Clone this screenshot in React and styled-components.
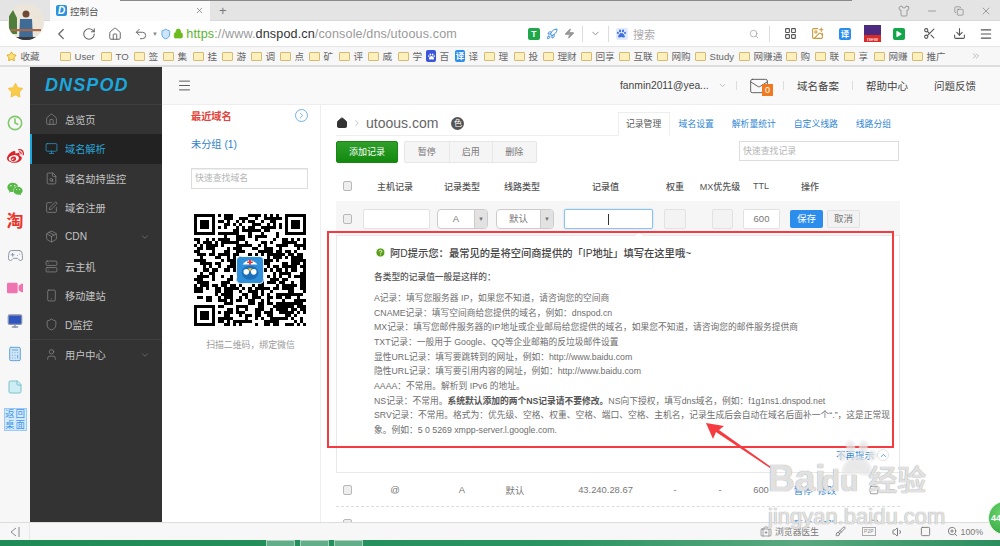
import styled, { createGlobalStyle } from "styled-components";
import {
  BriefcaseMedical, Brush, Calculator, ChevronDown, ChevronLeft, ChevronRight, ChevronUp, ChevronsRight, Clock, Copy, Download,
  FileSearch, Gamepad2, HelpCircle, House, ImagePlus, LayoutGrid, Lock, Mail, Menu, Minus, Monitor, Package, RotateCw, Rocket,
  Scissors, Search, Server, Shield, Shirt, Smartphone, Square, SquarePen, StickyNote, Star, Undo2, User, Volume1, X, Zap, ZoomIn,
} from "lucide-react";
import { FaWeibo, FaWeixin, FaPaw, FaPlay, FaVideo } from "react-icons/fa";

const GlobalStyle = createGlobalStyle`
  html, body { margin: 0; padding: 0; background: #fff; }
  * { box-sizing: border-box; }
  body { font-family: "Liberation Sans", "Noto Sans CJK SC", sans-serif; }
`;

const Page = styled.div`
  position: relative;
  width: 1000px;
  height: 546px;
  overflow: hidden;
  display: flex;
  flex-direction: column;
`;

/* browser chrome */
const TabBar = styled.div`
  height: 21px;
  background: #e4e4e4;
  display: flex;
  align-items: stretch;
  padding-left: 50px;
  box-shadow: inset 0 -1px 0 #d8d8d8;
`;
const Tab = styled.div`
  width: 160px;
  background: #fafafa;
  display: flex;
  align-items: center;
  gap: 3px;
  padding: 0 6px;
  font-size: 9.5px;
  color: #555;
`;
const TabLogo = styled.span`
  width: 11px;
  height: 11px;
  border-radius: 2px;
  background: #2d93dc;
  color: #fff;
  font: italic bold 10px/11px "Liberation Sans", sans-serif;
  text-align: center;
`;
const TabTitle = styled.span`
  flex: 1;
`;
const NewTab = styled.span`
  margin-left: 9px;
  font-size: 13px;
  line-height: 21px;
  color: #777;
`;
const WindowButtons = styled.div`
  margin-left: auto;
  display: flex;
  align-items: center;
  gap: 16px;
  padding-right: 8px;
  color: #777;
`;
const Avatar = styled.svg`
  position: absolute;
  left: 8px;
  top: 4px;
  width: 36px;
  height: 36px;
  border-radius: 50%;
`;
const TopShade = styled.div`
  position: absolute;
  left: 120px;
  top: 0;
  width: 732px;
  height: 1px;
  background: #8a8a8a;
`;
const NavBar = styled.div`
  height: 25px;
  background: #fff;
  display: flex;
  align-items: center;
  padding-left: 52px;
  color: #666;
`;
const NavButtons = styled.div`
  display: flex;
  align-items: center;
  gap: 12px;
  width: 112px;
`;
const NavCaret = styled.span`
  font-size: 6px;
  color: #888;
  margin-left: -8px;
`;
const Divider = styled.span`
  width: 1px;
  height: 16px;
  background: #ddd;
  margin: 0 ${(p) => p.$gap || 5}px;
  flex: none;
`;
const Url = styled.div`
  font-size: 12.6px;
  color: #9a9a9a;
  margin-left: 3px;
  width: 354px;
  white-space: nowrap;
  letter-spacing: 0.12px;
`;
const Https = styled.span`
  color: #58b62c;
`;
const Host = styled.span`
  color: #333;
`;
const NavTools = styled.div`
  display: flex;
  align-items: center;
  gap: 6px;
  color: #888;
`;
const SearchBox = styled.div`
  width: 141px;
  display: flex;
  align-items: center;
  gap: 5px;
  font-size: 11px;
  color: #aaa;
  padding-left: 2px;
`;
const SearchIcon = styled.span`
  margin-left: auto;
  margin-right: 5px;
  display: flex;
`;
const ToolIcons = styled.div`
  display: flex;
  align-items: center;
  color: #555;
  margin-left: 2px;
`;
const ToolSlot = styled.span`
  width: ${(p) => p.$w || 27}px;
  display: flex;
  align-items: center;
  justify-content: center;
  gap: 3px;
`;
const ColorTile = styled.span`
  width: ${(p) => p.$w || 12}px;
  height: 12px;
  border-radius: 2px;
  background: ${(p) => p.$bg};
  color: #fff;
  font-size: 8.5px;
  line-height: 12px;
  font-weight: bold;
  text-align: center;
  display: inline-flex;
  align-items: center;
  justify-content: center;
  flex: none;
`;
const NewTile = styled.span`
  width: 17px;
  height: 17px;
  background: linear-gradient(#4b2a80 60%, #d92a2a 60%);
  color: #fff;
  font-size: 6px;
  line-height: 6px;
  padding-top: 11px;
  text-align: center;
`;
const BookmarkBar = styled.div`
  height: 21px;
  background: #f7f7f7;
  border-top: 1px solid #e6e6e6;
  border-bottom: 2px solid #dedede;
  display: flex;
  align-items: center;
  padding-left: 6px;
  font-size: 9.6px;
  color: #666;
`;
const Bookmark = styled.span`
  width: ${(p) => p.$w}px;
  flex: none;
  display: flex;
  align-items: center;
  gap: 3.5px;
  white-space: nowrap;
`;
const Folder = styled.i`
  width: 11px;
  height: 9px;
  flex: none;
  background: #fdf0bd;
  border: 1px solid #d3bb73;
  border-radius: 1px;
`;
const MoreBookmarks = styled.span`
  margin-left: 19px;
  display: flex;
  color: #aaa;
`;

/* body */
const Body = styled.div`
  flex: 1;
  display: flex;
  min-height: 0;
`;
const Rail = styled.div`
  width: 30px;
  background: #f7f7f7;
  display: flex;
  flex-direction: column;
  align-items: center;
  padding-top: 14px;
  gap: 15px;
  flex: none;
`;
const RailIcon = styled.span`
  height: 18px;
  width: 18px;
  display: flex;
  align-items: center;
  justify-content: center;
  color: ${(p) => p.$color};
  font-weight: bold;
  font-size: 17px;
  line-height: 18px;
`;
const DesktopTile = styled.span`
  width: 23px;
  height: 23px;
  background: #d5ebff;
  border: 1px solid #9ccaf5;
  color: #3f97e8;
  font-size: 9.5px;
  line-height: 10px;
  display: grid;
  grid-template-columns: 1fr 1fr;
  text-align: center;
  margin-top: -3px;
`;
const Sidebar = styled.nav`
  width: 132px;
  background: #333;
  color: #c8c8c8;
  flex: none;
`;
const Logo = styled.div`
  height: 38px;
  border-bottom: 1px solid #3e3e3e;
  padding-left: 15px;
  font: italic bold 18px/36px "Liberation Sans", sans-serif;
  letter-spacing: 1.1px;
  color: #1ba7de;
`;
const SideItem = styled.div`
  height: 29.3px;
  display: flex;
  align-items: center;
  gap: 7px;
  font-size: 10.2px;
  background: ${(p) => (p.$active ? "#222" : "transparent")};
  color: ${(p) => (p.$active ? "#29a5d6" : "#c4c4c4")};
  border-left: ${(p) => (p.$active ? "2px solid #1ba7de" : "none")};
  padding-left: ${(p) => (p.$active ? 13 : 15)}px;
  border-top: ${(p) => (p.$rule ? "1px solid #3e3e3e" : "none")};
  svg.icon {
    color: ${(p) => (p.$active ? "#29a5d6" : "#8f8f8f")};
    flex: none;
  }
`;
const Caret = styled.span`
  margin-left: auto;
  padding-right: 12px;
  display: flex;
  color: #6f6f6f;
`;
const Right = styled.div`
  flex: 1;
  min-width: 0;
  display: flex;
  flex-direction: column;
`;
const AppHeader = styled.header`
  height: 38px;
  flex: none;
  background: #f9f9f9;
  border-bottom: 1px solid #eee;
  display: flex;
  align-items: center;
  padding-left: 15px;
  font-size: 10.5px;
  color: #444;
`;
const Hamburger = styled.span`
  display: flex;
  color: #444;
  margin-right: 428px;
`;
const HeaderUser = styled.span`
  width: 116px;
  font-size: 10.3px;
  white-space: nowrap;
  display: flex;
  align-items: center;
  gap: 9px;
  flex: none;
`;
const HeaderSep = styled.span`
  width: 1px;
  height: 9px;
  background: #ddd;
  flex: none;
`;
const MailWrap = styled.span`
  position: relative;
  display: flex;
  margin: 0 14px 0 12px;
  color: #555;
`;
const MailBadge = styled.span`
  position: absolute;
  left: 13px;
  top: 8px;
  width: 11px;
  height: 12px;
  background: #f07a22;
  color: #fff;
  font-size: 9px;
  line-height: 12px;
  text-align: center;
`;
const HeaderLink = styled.span`
  width: ${(p) => p.$w}px;
  padding-left: ${(p) => p.$pad}px;
  flex: none;
`;
const ContentRow = styled.div`
  flex: 1;
  min-height: 0;
  display: flex;
`;
const DomainPanel = styled.aside`
  width: 159px;
  flex: none;
  background: #fff;
  border-right: 1px solid #eee;
  padding: 2px 0 0 29px;
`;
const PanelHead = styled.div`
  width: 117px;
  display: flex;
  justify-content: space-between;
  align-items: center;
  color: #e0433b;
  font-size: 10.2px;
  font-weight: bold;
  height: 16px;
`;
const RoundButton = styled.span`
  width: 13px;
  height: 13px;
  border: 1px solid #6fb3e6;
  border-radius: 50%;
  color: #4d9cd8;
  display: flex;
  align-items: center;
  justify-content: center;
`;
const GroupLink = styled.div`
  margin-top: 15px;
  color: #2f7fc8;
  font-size: 10.2px;
  line-height: 14px;
`;
const DomainSearch = styled.div`
  width: 117px;
  height: 21px;
  margin-top: 16px;
  border: 1px solid #ddd;
  box-shadow: inset 0 1px 1px #eee;
  font-size: 8.9px;
  line-height: 19px;
  color: #b5b5b5;
  padding-left: 3px;
`;
const QrWrap = styled.div`
  position: relative;
  width: 112px;
  height: 112px;
  margin: 25px 0 0 3px;
`;
const QrLogo = styled.svg`
  position: absolute;
  left: 42px;
  top: 42px;
  width: 28px;
  height: 28px;
`;
const QrCaption = styled.div`
  margin-top: 12px;
  width: 117px;
  margin-left: 1px;
  text-align: center;
  font-size: 8.9px;
  color: #999;
`;
const Content = styled.main`
  flex: 1;
  overflow: hidden;
  padding: 7px 100px 0 15px;
  background: #fff;
`;
const TitleRow = styled.div`
  height: 24px;
  display: flex;
  align-items: flex-end;
  border-bottom: 1px solid #eee;
`;
const Crumb = styled.div`
  width: 282px;
  height: 24px;
  display: flex;
  align-items: center;
  color: #666;
  font-size: 14px;
  gap: 4px;
`;
const CrumbHome = styled.span`
  color: #333;
  display: flex;
`;
const CrumbBadge = styled.span`
  width: 13px;
  height: 13px;
  border-radius: 50%;
  margin-left: 9px;
  background: #555;
  color: #fff;
  font-size: 8px;
  line-height: 13px;
  text-align: center;
`;
const Tabs = styled.div`
  display: flex;
  align-items: flex-end;
  font-size: 8.8px;
`;
const TabLink = styled.span`
  height: 24px;
  line-height: 23px;
  padding: 0 ${(p) => (p.$active ? 7.4 : 8)}px;
  color: ${(p) => (p.$active ? "#555" : "#2f86d2")};
  background: #fff;
  border: 1px solid ${(p) => (p.$active ? "#eee" : "transparent")};
  border-bottom: ${(p) => (p.$active ? "1px solid #fff" : "none")};
  margin-bottom: -1px;
  white-space: nowrap;
`;
const Toolbar = styled.div`
  height: 22px;
  margin-top: 5px;
  display: flex;
`;
const AddButton = styled.span`
  width: 62px;
  background: linear-gradient(#2f9f2a, #128a0e);
  border: 1px solid #1b8516;
  border-radius: 2px;
  color: #fff;
  font-size: 9px;
  line-height: 20px;
  text-align: center;
`;
const ButtonGroup = styled.div`
  display: flex;
  margin-left: 6px;
  border: 1px solid #e6e6e6;
  border-radius: 2px;
  background: #f5f5f5;
`;
const GroupButton = styled.span`
  width: 43.5px;
  text-align: center;
  color: #777;
  font-size: 9px;
  line-height: 20px;
  border-left: ${(p) => (p.$first ? "none" : "1px solid #e6e6e6")};
`;
const RecordSearch = styled.div`
  margin-left: auto;
  margin-right: 1px;
  width: 160px;
  height: 20px;
  border: 1px solid #ddd;
  font-size: 8.9px;
  line-height: 18px;
  color: #b5b5b5;
  padding-left: 3px;
`;
const columns = "27px 64px 70px 50px 117px 22px 68px 14px 84px 1fr";
const HeadRow = styled.div`
  height: 30px;
  margin-top: 8px;
  display: grid;
  grid-template-columns: ${columns};
  align-items: center;
  justify-items: center;
  color: #555;
  font-size: 9px;
  font-weight: 500;
  white-space: nowrap;
`;
const Check = styled.i`
  width: 9px;
  height: 10px;
  border: 1px solid #b8b8b8;
  border-radius: 2px;
  background: #eee;
  display: block;
  justify-self: start;
  margin-left: 7px;
`;
const EditRow = styled.div`
  height: 34px;
  background: #f6f6f6;
  display: grid;
  grid-template-columns: 27px 74px 59px 68px 100px 48px 31px 47px auto;
  align-items: center;
  padding-top: 2px;
`;
const Field = styled.div`
  width: ${(p) => p.$w}px;
  height: 20px;
  background: ${(p) => (p.$empty ? "#f3f3f3" : "#fff")};
  border: 1px solid ${(p) => (p.$focus ? "#8cc4ee" : "#e2e2e2")};
  box-shadow: ${(p) => (p.$focus ? "0 0 2px #a9d4f5" : "none")};
  border-radius: 2px;
  font-size: 9.5px;
  line-height: 18px;
  text-align: center;
  color: #777;
`;
const Select = styled.div`
  width: ${(p) => p.$w}px;
  height: 20px;
  display: flex;
  background: #fff;
  border: 1px solid #ccc;
  border-radius: 4px;
  overflow: hidden;
  font-size: 9.5px;
  line-height: 18px;
  color: #777;
`;
const SelectValue = styled.span`
  flex: 1;
  text-align: center;
`;
const SelectArrow = styled.span`
  width: 13px;
  background: #e2e2e2;
  border-left: 1px solid #ccc;
  color: #777;
  font-size: 6px;
  text-align: center;
`;
const Caretline = styled.i`
  display: inline-block;
  width: 1px;
  height: 11px;
  background: #333;
  vertical-align: middle;
`;
const Actions = styled.div`
  display: flex;
  gap: 4px;
`;
const SaveButton = styled.span`
  width: 33px;
  height: 18px;
  background: #2c8ded;
  border-radius: 2px;
  color: #fff;
  font-size: 9.5px;
  line-height: 18px;
  text-align: center;
`;
const CancelButton = styled.span`
  width: 33px;
  height: 18px;
  background: #f2f2f2;
  border: 1px solid #e2e2e2;
  border-radius: 2px;
  color: #777;
  font-size: 9.5px;
  line-height: 16px;
  text-align: center;
`;
const TipPanel = styled.section`
  position: relative;
  height: 238px;
  padding: 8px 6px 0 37px;
  border: 1px solid #e8e8e8;
  background: #fff;
  color: #6e6e6e;
  &::before {
    content: "";
    position: absolute;
    left: 298px;
    top: -4px;
    width: 7px;
    height: 7px;
    background: #fff;
    border: 1px solid #e8e8e8;
    border-width: 1px 0 0 1px;
    transform: rotate(45deg);
  }
`;
const TipTitle = styled.div`
  display: flex;
  align-items: center;
  gap: 4px;
  font-size: 10.3px;
  height: 16px;
  color: #444;
  font-weight: 500;
  margin-left: 1px;
  white-space: nowrap;
`;
const TipSub = styled.div`
  margin-top: 10px;
  font-size: 8.7px;
  line-height: 14px;
  color: #555;
  font-weight: 500;
`;
const TipList = styled.div`
  margin-top: 7px;
  font-size: 8.75px;
  line-height: 14.67px;
  white-space: nowrap;
`;
const TipLine = styled.div`
  overflow: hidden;
`;
const Strong = styled.b`
  color: #555;
  font-weight: 700;
`;
const TipClose = styled.div`
  position: absolute;
  right: 10px;
  top: 212px;
  display: flex;
  align-items: center;
  gap: 3px;
  font-size: 9.5px;
  color: #2f86d2;
`;
const CloseRing = styled.span`
  width: 12px;
  height: 12px;
  border: 1px solid #e3e3e3;
  border-radius: 50%;
  display: flex;
  align-items: center;
  justify-content: center;
`;
const DataRow = styled.div`
  height: 34px;
  display: grid;
  grid-template-columns: ${columns};
  align-items: center;
  justify-items: center;
  color: #777;
  font-size: 9.4px;
  border-bottom: 1px dashed #ddd;
  white-space: nowrap;
`;
const LineCell = styled.span`
  margin-right: 14px;
`;
const RowLinks = styled.span`
  color: #2f86d2;
  display: flex;
  gap: 5px;
  margin-left: 10px;
  grid-column: 9;
`;
const RowIcons = styled.span`
  display: flex;
  gap: 7px;
  justify-self: start;
  margin-left: 17px;
  color: #888;
`;

/* bottom */
const StatusBar = styled.footer`
  height: 18px;
  background: #f7f7f7;
  border-top: 1px solid #ddd;
  display: flex;
  align-items: center;
  color: #777;
  font-size: 8.8px;
  flex: none;
`;
const StatusCollapse = styled.span`
  width: 30px;
  height: 100%;
  border-right: 1px solid #e8e8e8;
  display: flex;
  align-items: center;
  justify-content: center;
  color: #888;
`;
const StatusTools = styled.div`
  margin-left: auto;
  padding-right: 17px;
  display: flex;
  align-items: center;
  gap: 16px;
`;
const StatusGroup = styled.span`
  display: flex;
  align-items: center;
  gap: 3px;
  white-space: nowrap;
`;
const P2pTag = styled.span`
  border: 1px solid #aaa;
  font-size: 5px;
  line-height: 7px;
  padding: 0 1px;
  color: #888;
`;
const TaskBar = styled.div`
  height: 6px;
  flex: none;
  background: linear-gradient(90deg, #1f8a55, #2a9362 55%, #5aa880 80%, #2b8d5d);
  display: flex;
  padding-left: 266px;
  gap: 5px;
`;
const TaskButton = styled.span`
  width: 29px;
  background: #62ae8a;
  border: 1px solid #a9d2bd;
  border-bottom: none;
`;

/* things painted over the screenshot */
const RedFrame = styled.div`
  position: absolute;
  left: 327px;
  top: 231px;
  width: 567px;
  height: 217px;
  border: 2px solid #f53b3f;
  pointer-events: none;
`;
const ArrowMark = styled.svg`
  position: absolute;
  left: 695px;
  top: 415px;
  width: 90px;
  height: 65px;
`;
const Watermark = styled.div`
  position: absolute;
  left: 768px;
  top: 460px;
  width: 180px;
  color: rgba(255, 255, 255, 0.68);
  text-shadow: 0 0 1px #aaa, 0 0 1px #aaa;
`;
const MarkBrand = styled.div`
  display: flex;
  align-items: baseline;
  font-weight: bold;
  line-height: 38px;
  white-space: nowrap;
`;
const MarkBai = styled.span`
  font-size: 37px;
`;
const MarkDu = styled.span`
  font-size: 30px;
  margin-left: -4px;
`;
const MarkCjk = styled.span`
  font-size: 29px;
  font-weight: 500;
  margin-left: 10px;
`;
const MarkUrl = styled.div`
  font-size: 22px;
  line-height: 24px;
  margin-top: 5px;
  white-space: nowrap;
`;
const MarkPaw = styled.span`
  position: absolute;
  left: 70px;
  top: -21px;
  color: rgba(255, 255, 255, 0.5);
  filter: drop-shadow(0 0 1px #aaa);
`;
const CountBall = styled.div`
  position: absolute;
  left: 988px;
  top: 501px;
  width: 34px;
  height: 34px;
  border-radius: 50%;
  background: radial-gradient(circle at 40% 35%, #6ad46a, #2b9d3c);
  border: 1px solid #dff1df;
  color: #fff;
  font-size: 9px;
  font-weight: bold;
  line-height: 32px;
  padding-left: 2px;
`;

const bookmarks = [
  ["User", 41], ["TO", 33], ["签", 29], ["集", 30], ["挂", 29], ["游", 29], ["调", 29], ["点", 29], ["矿", 30], ["评", 29], ["威", 30], ["学", 28],
];
const bookmarks2 = [
  ["理", 30], ["投", 29], ["理财", 38], ["回享", 38], ["互联", 38], ["网购", 38], ["Study", 44], ["网赚通", 47], ["购", 29], ["联", 29], ["享", 30], ["网赚", 38], ["推广", 40],
];

const sideItems = [
  ["总览页", House],
  ["域名解析", Monitor, "active"],
  ["域名劫持监控", FileSearch],
  ["域名注册", SquarePen],
  ["CDN", Package, "caret"],
  ["云主机", Server],
  ["移动建站", Smartphone],
  ["D监控", Shield],
  ["用户中心", User, "caret", "rule"],
];

const tipLines = [
  "A记录：填写您服务器 IP，如果您不知道，请咨询您的空间商",
  "CNAME记录：填写空间商给您提供的域名，例如：dnspod.cn",
  "MX记录：填写您邮件服务器的IP地址或企业邮局给您提供的域名，如果您不知道，请咨询您的邮件服务提供商",
  "TXT记录：一般用于 Google、QQ等企业邮箱的反垃圾邮件设置",
  "显性URL记录：填写要跳转到的网址，例如：http://www.baidu.com",
  "隐性URL记录：填写要引用内容的网址，例如：http://www.baidu.com",
  "AAAA：不常用。解析到 IPv6 的地址。",
];

// finder patterns are fixed, the rest of the modules come from a small seeded generator
function qrCells(size) {
  const cells = [];
  let seed = 20160;
  const far = size - 8;
  const inFinder = (x, y) => (x < 8 && y < 8) || (x >= far && y < 8) || (x < 8 && y >= far);
  for (let y = 0; y < size; y++) {
    for (let x = 0; x < size; x++) {
      seed = (seed * 1103515245 + 12345) & 0x7fffffff;
      if (!inFinder(x, y) && (seed >> 16) % 100 < 52) cells.push([x, y]);
    }
  }
  return cells;
}

function QrCode() {
  const size = 37;
  const finders = [[0, 0], [size - 7, 0], [0, size - 7]];
  return (
    <QrWrap>
      <svg width="112" height="112" viewBox={`0 0 ${size} ${size}`} shapeRendering="crispEdges">
        {qrCells(size).map(([x, y]) => (
          <rect key={`${x}-${y}`} x={x} y={y} width="1" height="1" fill="#000" />
        ))}
        {finders.map(([x, y]) => (
          <g key={`${x}-${y}`}>
            <rect x={x} y={y} width="7" height="7" fill="#000" />
            <rect x={x + 1} y={y + 1} width="5" height="5" fill="#fff" />
            <rect x={x + 2} y={y + 2} width="3" height="3" fill="#000" />
          </g>
        ))}
      </svg>
      <QrLogo viewBox="0 0 30 30">
        <rect x="0.5" y="0.5" width="29" height="29" rx="4" fill="#2f8fd8" stroke="#fff" />
        <path d="M7 9 Q15 0 23 9 Z" fill="#fff" />
        <path d="M14 4h2v2h2v1.5h-2v2h-2v-2h-2V6h2z" fill="#e33" />
        <ellipse cx="15" cy="18" rx="9" ry="7.5" fill="#1d6fb8" />
        <circle cx="11" cy="17" r="3" fill="#fff" />
        <circle cx="19" cy="17" r="3" fill="#fff" />
        <path d="M13 13h4l-2 4z" fill="#f2c230" />
      </QrLogo>
    </QrWrap>
  );
}

export default function App() {
  return (
    <Page>
      <GlobalStyle />
      <TabBar>
        <Tab>
          <TabLogo>D</TabLogo>
          <TabTitle>控制台</TabTitle>
          <X size={9} color="#777" />
        </Tab>
        <NewTab>+</NewTab>
        <WindowButtons>
          <Shirt size={12} strokeWidth={1.3} />
          <Minus size={12} strokeWidth={1.3} />
          <Copy size={10} strokeWidth={1.5} />
          <X size={12} strokeWidth={1.3} />
        </WindowButtons>
      </TabBar>
      <NavBar>
        <NavButtons>
          <ChevronLeft size={18} strokeWidth={1.6} />
          <RotateCw size={14} strokeWidth={1.8} />
          <House size={14} strokeWidth={1.7} />
          <Undo2 size={14} strokeWidth={1.7} />
          <NavCaret>▼</NavCaret>
        </NavButtons>
        <Shield size={12} color="#5aa7e6" fill="#cfe6fa" />
        <Lock size={11} color="#6cbb1e" fill="#6cbb1e" style={{ marginLeft: 1 }} />
        <Url>
          <Https>https</Https>://www.<Host>dnspod.cn</Host>/console/dns/utoous.com
        </Url>
        <NavTools>
          <ColorTile $bg="#1fa74a">T</ColorTile>
          <Rocket size={12} color="#3d8fe0" />
          <Zap size={11} color="#999" fill="#999" />
          <Divider $gap={1} />
          <ChevronDown size={11} />
          <Divider $gap={1} />
          <ColorTile $bg="#dfe9ff"><FaPaw size={9} color="#3f6fe0" /></ColorTile>
        </NavTools>
        <SearchBox>
          <span>&nbsp;搜索</span>
          <SearchIcon><Search size={10} /></SearchIcon>
        </SearchBox>
        <Divider $gap={0} />
        <ToolIcons>
          <ToolSlot><LayoutGrid size={13} /></ToolSlot>
          <ToolSlot><ImagePlus size={13} color="#c99a3a" /></ToolSlot>
          <ToolSlot $w={28}><ColorTile $bg="#2a8df0">译</ColorTile></ToolSlot>
          <ToolSlot><NewTile>new</NewTile></ToolSlot>
          <ToolSlot><ColorTile $bg="#14a64a"><FaPlay size={6} /></ColorTile></ToolSlot>
          <ToolSlot $w={33}><Scissors size={13} /></ToolSlot>
          <ToolSlot><Download size={13} /></ToolSlot>
          <ToolSlot><Menu size={14} /></ToolSlot>
        </ToolIcons>
      </NavBar>
      <BookmarkBar>
        <Bookmark $w={54}>
          <Star size={11} color="#d9a71f" fill="#fde07a" />
          收藏
        </Bookmark>
        {bookmarks.map(([name, w]) => (
          <Bookmark key={name} $w={w}><Folder />{name}</Bookmark>
        ))}
        <Bookmark $w={29}>
          <ColorTile $bg="#3a55d8" $w={10}><FaPaw size={7} /></ColorTile>百
        </Bookmark>
        <Bookmark $w={29}>
          <ColorTile $bg="#2a8df0" $w={10}>译</ColorTile>译
        </Bookmark>
        {bookmarks2.map(([name, w]) => (
          <Bookmark key={name} $w={w}><Folder />{name}</Bookmark>
        ))}
        <MoreBookmarks><ChevronsRight size={10} /></MoreBookmarks>
      </BookmarkBar>
      <Body>
        <Rail>
          <RailIcon $color="#f3b62e"><Star size={17} fill="#f8cc4a" strokeWidth={1} /></RailIcon>
          <RailIcon $color="#7fc96a"><Clock size={16} strokeWidth={2.4} /></RailIcon>
          <RailIcon $color="#d8262c"><FaWeibo size={17} /></RailIcon>
          <RailIcon $color="#58b848"><FaWeixin size={16} /></RailIcon>
          <RailIcon $color="#e8352b">淘</RailIcon>
          <RailIcon $color="#8a93a8"><Gamepad2 size={17} strokeWidth={1.4} /></RailIcon>
          <RailIcon $color="#ef74b0"><FaVideo size={16} /></RailIcon>
          <RailIcon $color="#3d6fd0"><Monitor size={16} fill="#2f55c0" stroke="#8a93a8" /></RailIcon>
          <RailIcon $color="#5a9fd8"><Calculator size={16} fill="#cfe4f5" strokeWidth={1.4} /></RailIcon>
          <RailIcon $color="#74bcc8"><StickyNote size={16} fill="#cdeef2" strokeWidth={1.4} /></RailIcon>
          <DesktopTile><span>返</span><span>回</span><span>桌</span><span>面</span></DesktopTile>
        </Rail>
        <Sidebar>
          <Logo>DNSPOD</Logo>
          {sideItems.map(([label, Icon, flag, rule]) => (
            <SideItem key={label} $active={flag === "active"} $rule={rule === "rule"}>
              <Icon className="icon" size={13} strokeWidth={1.3} />
              {label}
              {flag === "caret" && (
                <Caret><ChevronDown size={10} /></Caret>
              )}
            </SideItem>
          ))}
        </Sidebar>
        <Right>
          <AppHeader>
            <Hamburger><Menu size={15} strokeWidth={1.4} /></Hamburger>
            <HeaderUser>
              fanmin2011@yea...
              <ChevronDown size={9} color="#aaa" />
            </HeaderUser>
            <HeaderSep />
            <MailWrap>
              <Mail size={20} strokeWidth={1.1} />
              <MailBadge>0</MailBadge>
            </MailWrap>
            <HeaderSep />
            <HeaderLink $w={68} $pad={13}>域名备案</HeaderLink>
            <HeaderSep />
            <HeaderLink $w={81} $pad={13}>帮助中心</HeaderLink>
            <HeaderLink $w={60} $pad={0}>问题反馈</HeaderLink>
          </AppHeader>
          <ContentRow>
            <DomainPanel>
              <PanelHead>
                最近域名
                <RoundButton><ChevronRight size={9} /></RoundButton>
              </PanelHead>
              <GroupLink>未分组 (1)</GroupLink>
              <DomainSearch>快速查找域名</DomainSearch>
              <QrCode />
              <QrCaption>扫描二维码，绑定微信</QrCaption>
            </DomainPanel>
            <Content>
              <TitleRow>
                <Crumb>
                  <CrumbHome><House size={12} fill="#333" /></CrumbHome>
                  <ChevronRight size={10} color="#bbb" />
                  utoous.com
                  <CrumbBadge>色</CrumbBadge>
                </Crumb>
                <Tabs>
                  <TabLink $active>记录管理</TabLink>
                  <TabLink>域名设置</TabLink>
                  <TabLink>解析量统计</TabLink>
                  <TabLink>自定义线路</TabLink>
                  <TabLink>线路分组</TabLink>
                </Tabs>
              </TitleRow>
              <Toolbar>
                <AddButton>添加记录</AddButton>
                <ButtonGroup>
                  <GroupButton $first>暂停</GroupButton>
                  <GroupButton>启用</GroupButton>
                  <GroupButton>删除</GroupButton>
                </ButtonGroup>
                <RecordSearch>快速查找记录</RecordSearch>
              </Toolbar>
              <HeadRow>
                <Check />
                <span>主机记录</span>
                <span>记录类型</span>
                <span>线路类型</span>
                <span>记录值</span>
                <span>权重</span>
                <span>MX优先级</span>
                <span>TTL</span>
                <span>操作</span>
              </HeadRow>
              <EditRow>
                <Check />
                <Field $w={67} />
                <Select $w={51}><SelectValue>A</SelectValue><SelectArrow>▼</SelectArrow></Select>
                <Select $w={58}><SelectValue>默认</SelectValue><SelectArrow>▼</SelectArrow></Select>
                <Field $w={89} $focus><Caretline /></Field>
                <Field $w={22} $empty />
                <Field $w={21} $empty />
                <Field $w={37}>600</Field>
                <Actions>
                  <SaveButton>保存</SaveButton>
                  <CancelButton>取消</CancelButton>
                </Actions>
              </EditRow>
              <TipPanel>
                <TipTitle>
                  <HelpCircle size={11} color="#fff" fill="#5b9e1a" />
                  阿D提示您：最常见的是将空间商提供的「IP地址」填写在这里哦~
                </TipTitle>
                <TipSub>各类型的记录值一般是这样的：</TipSub>
                <TipList>
                  {tipLines.map((line) => (
                    <TipLine key={line}>{line}</TipLine>
                  ))}
                  <TipLine>NS记录：不常用。<Strong>系统默认添加的两个NS记录请不要修改。</Strong>NS向下授权，填写dns域名，例如：f1g1ns1.dnspod.net</TipLine>
                  <TipLine>SRV记录：不常用。格式为：优先级、空格、权重、空格、端口、空格、主机名，记录生成后会自动在域名后面补一个“.”，这是正常现</TipLine>
                  <TipLine>象。例如：5 0 5269 xmpp-server.l.google.com.</TipLine>
                </TipList>
                <TipClose>不再提示 <CloseRing><ChevronUp size={9} /></CloseRing></TipClose>
              </TipPanel>
              <DataRow>
                <Check />
                <span>@</span>
                <span>A</span>
                <LineCell>默认</LineCell>
                <span>43.240.28.67</span>
                <span>-</span>
                <span>-</span>
                <span>600</span>
                <RowLinks><span>暂停</span><span>修改</span></RowLinks>
                <RowIcons><Square size={10} /><Minus size={10} /></RowIcons>
              </DataRow>
              <DataRow>
                <Check />
                <RowLinks><span>暂停</span><span>修改</span></RowLinks>
                <RowIcons><Square size={10} /></RowIcons>
              </DataRow>
            </Content>
          </ContentRow>
        </Right>
      </Body>
      <StatusBar>
        <StatusCollapse>
          <svg width="12" height="12" viewBox="0 0 12 12" fill="none" stroke="currentColor">
            <path d="M7 2 2 6l5 4M10 1v10" />
          </svg>
        </StatusCollapse>
        <StatusTools>
          <StatusGroup><BriefcaseMedical size={12} strokeWidth={1.3} />浏览器医生</StatusGroup>
          <Brush size={11} />
          <P2pTag>P2P</P2pTag>
          <Volume1 size={12} />
          <Square size={11} />
          <StatusGroup><ZoomIn size={11} />100%</StatusGroup>
        </StatusTools>
      </StatusBar>
      <TaskBar>
        <TaskButton />
        <TaskButton />
        <TaskButton />
      </TaskBar>

      <Avatar viewBox="0 0 36 36">
        <rect width="36" height="36" fill="#ece6da" />
        <path d="M1 30V12l4-6 4 8v16z" fill="#4f7d3c" />
        <circle cx="18" cy="10" r="3.5" fill="#6e4a34" />
        <path d="M12 15h12l1 21H11z" fill="#3f6b96" />
        <rect x="3" y="25" width="30" height="2.2" fill="#a9694a" />
        <path d="M8 33h20v3H8z" fill="#3a3a3a" />
      </Avatar>
      <TopShade />
      <RedFrame />
      <ArrowMark viewBox="0 0 90 65">
        <polygon points="11,8 29,11 24,15 76,52 75,53 21,17 18,24" fill="#f53b3f" />
      </ArrowMark>
      <Watermark>
        <MarkPaw><FaPaw size={38} /></MarkPaw>
        <MarkBrand>
          <MarkBai>Bai</MarkBai>
          <MarkDu>du</MarkDu>
          <MarkCjk>经验</MarkCjk>
        </MarkBrand>
        <MarkUrl>jingyan.baidu.com</MarkUrl>
      </Watermark>
      <CountBall>44</CountBall>
    </Page>
  );
}
